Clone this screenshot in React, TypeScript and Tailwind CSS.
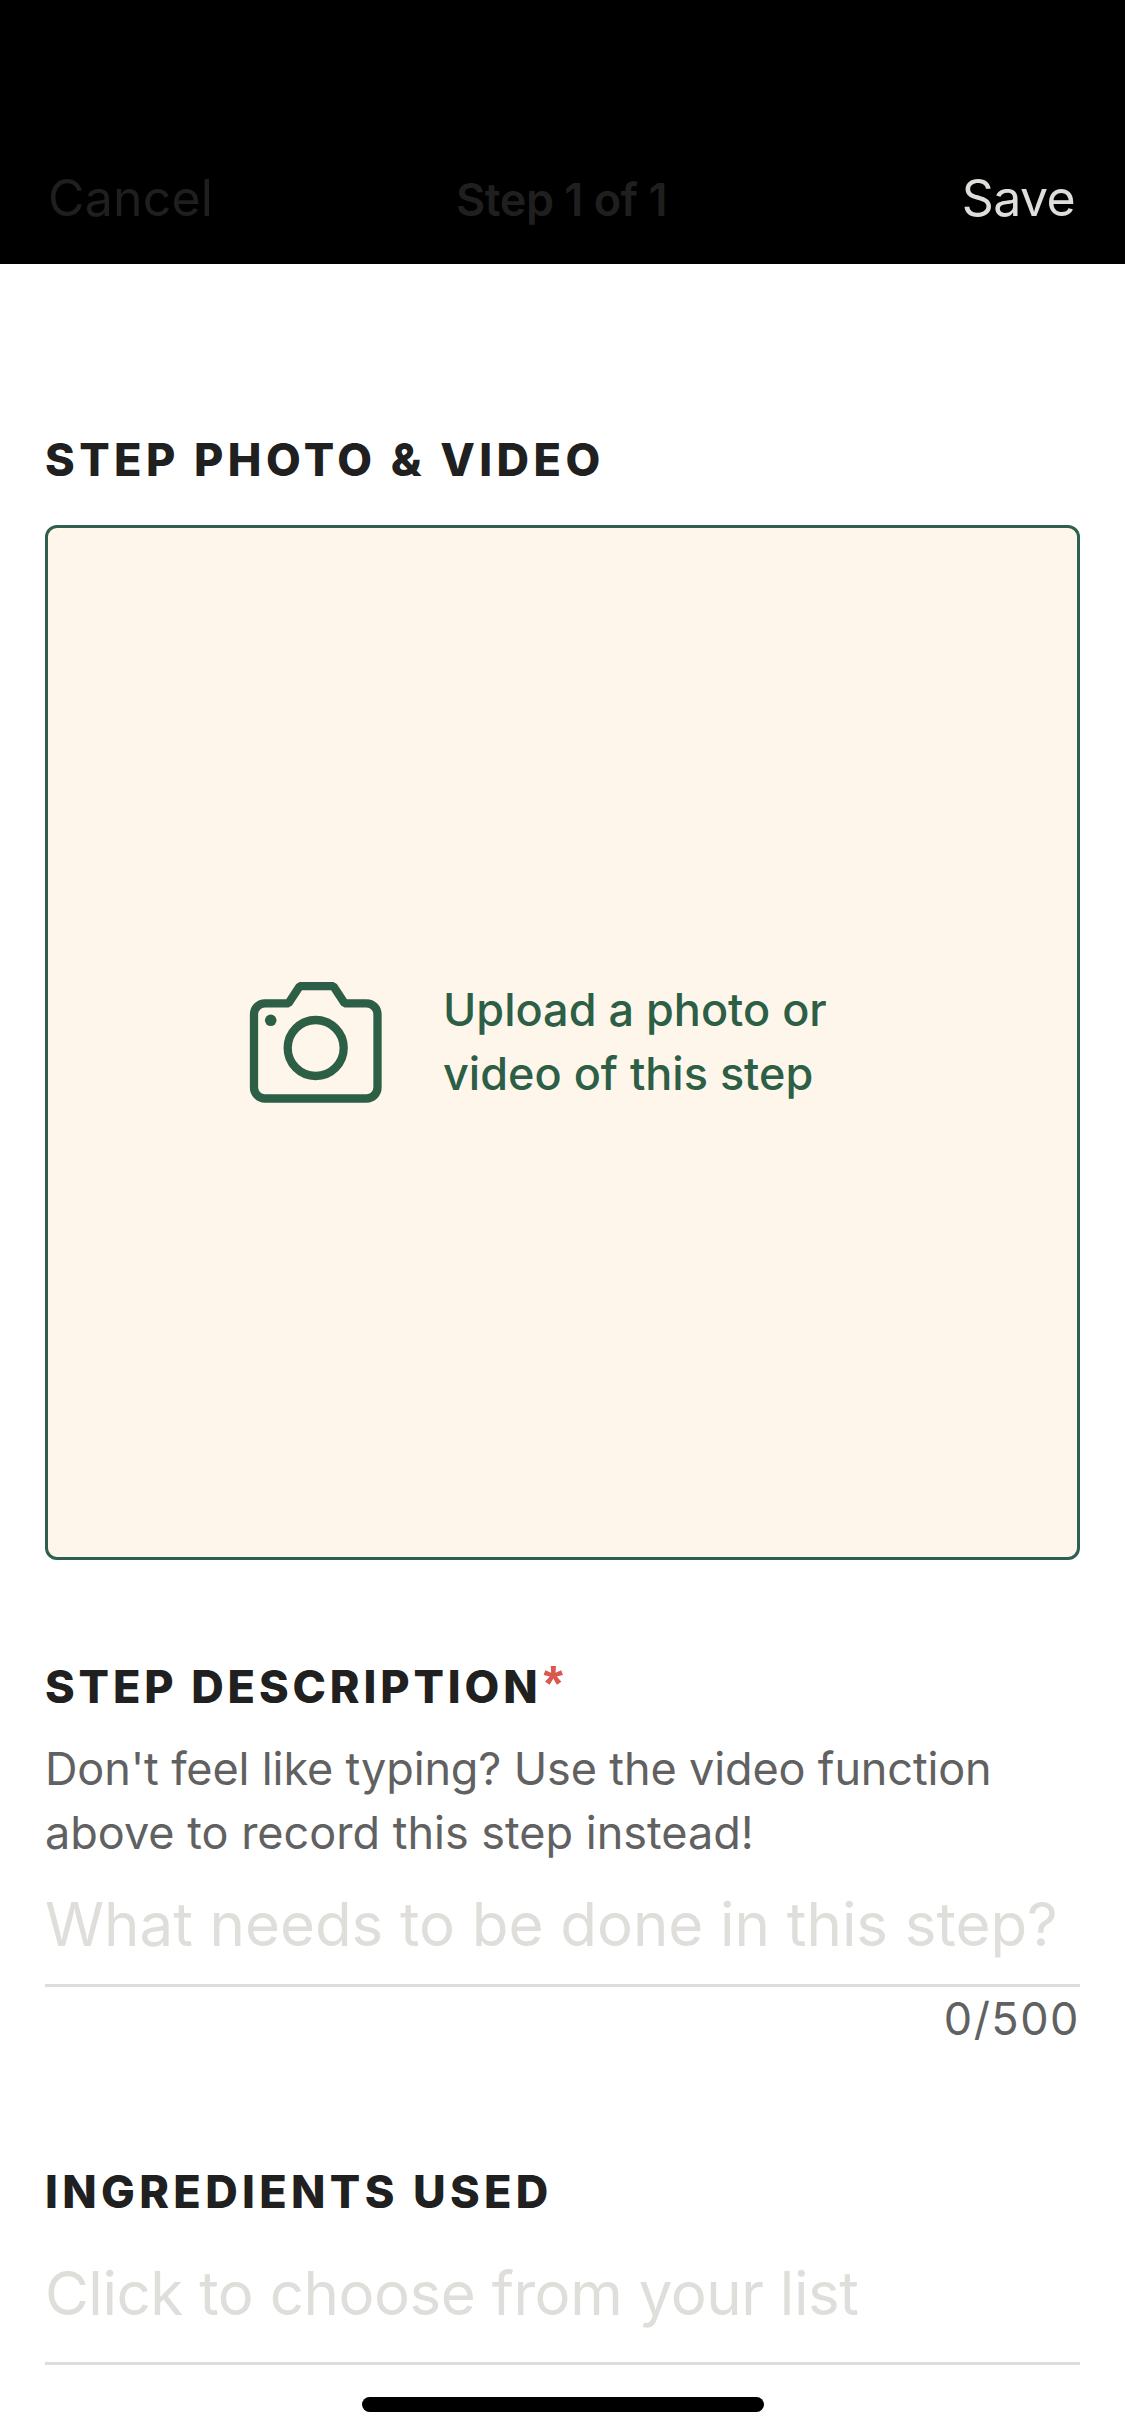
function CameraIcon() {
  return (
    <svg
      className="h-[129px] w-[140px] shrink-0"
      viewBox="0 0 140 129"
      fill="none"
      stroke="#2d5e46"
      strokeWidth="8.3"
      strokeLinejoin="bevel"
      aria-hidden="true"
    >
      <path d="M19 25.3H42.5L53.7 8.2H87.4L98.6 25.3H120.5A11 11 0 0 1 131.5 36.3V109.5A11 11 0 0 1 120.5 120.5H19A11 11 0 0 1 8 109.5V36.3A11 11 0 0 1 19 25.3Z" />
      <circle cx="69.7" cy="70" r="28" />
      <circle cx="24.7" cy="42.3" r="5.8" fill="#2d5e46" stroke="none" />
    </svg>
  );
}

export default function App() {
  return (
    <div className="flex h-[2436px] w-[1125px] flex-col overflow-hidden bg-white font-['Inter','Liberation_Sans',sans-serif] text-[45px] leading-[54px] text-[#202020]">
      <header className="grid h-[264px] shrink-0 grid-cols-[1fr_auto_1fr] items-baseline bg-black pl-12 pr-[50px] pt-[168px] text-[50px] leading-[60px] text-[#1f1f1f]">
        <button className="justify-self-start tracking-[0.2px]">Cancel</button>
        <h1 className="text-[45px] font-semibold tracking-[-0.5px]">Step 1 of 1</h1>
        <button className="justify-self-end tracking-[-0.6px] text-[#dfdedb]">Save</button>
      </header>

      <main className="flex flex-col px-[45px] pt-[169px]">
        <section>
          <h2 className="font-extrabold tracking-[4.45px]">STEP PHOTO &amp; VIDEO</h2>
          <button className="mt-[38px] flex h-[1035px] w-full items-center gap-[57px] rounded-[12px] border-[3px] border-[#2f5f4d] bg-[#fef6ea] pl-[198px] text-left font-medium leading-[64px] text-[#2d5e46]">
            <CameraIcon />
            <span className="pb-[2px]">
              Upload a photo or
              <br />
              video of this step
            </span>
          </button>
        </section>

        <section className="mt-[100px]">
          <h2 className="flex font-extrabold tracking-[3.88px]">
            STEP DESCRIPTION
            <span className="relative -top-[3px] left-[2px] font-['Liberation_Sans'] text-[50px] font-bold tracking-normal text-[#d9594e]">
              *
            </span>
          </h2>
          <p className="mt-[23px] leading-[64px] tracking-[-0.13px] text-[#616161]">
            Don't feel like typing? Use the video function
            <br />
            <span className="tracking-normal">above to record this step instead!</span>
          </p>
          <div className="mt-[19px] whitespace-nowrap border-b-[3px] border-[#dddddb] pb-5 text-[60px] leading-[80px] tracking-[-0.04px] text-[#dfdeda]">
            What needs to be done in this step?
          </div>
          <p className="mt-[5px] text-right tracking-[1.5px] text-[#616161]">0/500</p>
        </section>

        <section className="mt-[119px]">
          <h2 className="font-extrabold tracking-[4.35px]">INGREDIENTS USED</h2>
          <div className="mt-[34px] whitespace-nowrap border-b-[3px] border-[#dddddb] pb-[29px] text-[60px] leading-[80px] tracking-[-0.46px] text-[#dfdeda]">
            Click to choose from your list
          </div>
        </section>
      </main>

      <div className="mt-8 h-[15px] w-[402px] shrink-0 self-center rounded-full bg-black" />
    </div>
  );
}
